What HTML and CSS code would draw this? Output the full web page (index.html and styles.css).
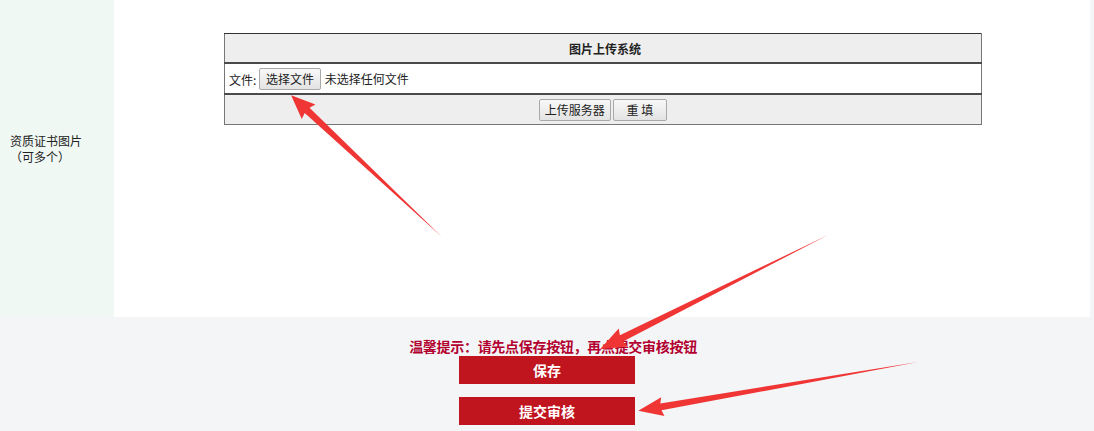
FILE: index.html
```
<!DOCTYPE html>
<html lang="zh-CN">
<head>
    <meta charset="UTF-8">
    <title>资质证书上传</title>
    <link rel="stylesheet" href="styles.css">
</head>
<body>

<div class="page">
    <div class="form-row">
        <div class="label-cell">资质证书图片<br>（可多个）</div>
        <div class="field-cell">
            <table class="upload-table">
                <tr class="head-row">
                    <th>图片上传系统</th>
                </tr>
                <tr class="file-row">
                    <td>
                        <span class="file-label">文件:</span>
                        <button class="btn" type="button">选择文件</button>
                        <span class="file-name">未选择任何文件</span>
                    </td>
                </tr>
                <tr class="action-row">
                    <td>
                        <button class="btn btn-upload" type="button">上传服务器</button>
                        <button class="btn btn-reset" type="button">重 填</button>
                    </td>
                </tr>
            </table>
        </div>
    </div>

    <div class="submit-area">
        <p class="tip">温馨提示：请先点保存按钮，再点提交审核按钮</p>
        <button class="red-btn" type="button">保存</button>
        <button class="red-btn" type="button">提交审核</button>
    </div>

    <!-- стрелки поверх скриншота -->
    <svg class="arrows" width="1094" height="431" viewBox="0 0 1094 431">
        <g fill="#f03535">
            <polygon transform="translate(442 237) rotate(223.2)" points="0,0 185,-3.5 183,-10 207,0 183,10 185,3.5"/>
            <polygon transform="translate(828 235) rotate(153.4)" points="0,0 231,-3.5 229,-10 255,0 229,10 231,3.5"/>
            <polygon transform="translate(918 362) rotate(170.1)" points="0,0 261,-3.5 259,-9.5 284,0 259,9.5 261,3.5"/>
        </g>
    </svg>
</div>

</body>
</html>
```

FILE: styles.css
```
body {
    margin: 0;
    font-family: "Noto Sans CJK SC", "Liberation Sans", sans-serif;
    font-size: 12px;
    color: #222;
    background-color: #f4f5f7;
}

.page {
    position: relative;
    width: 1094px;
    height: 431px;
    overflow: hidden;
}

.form-row {
    display: flex;
    height: 317px;
    margin-right: 4px;
}

.label-cell {
    width: 104px;
    padding: 133px 0 0 10px;
    line-height: 16px;
    background-color: #f0f8f4;
}

.field-cell {
    flex: 1;
    padding: 33px 0 0 110px;
    background-color: #fff;
}

.upload-table {
    width: 758px;
    border-collapse: collapse;
    border: 1px solid #777;
    border-top-color: #333;
}

.upload-table th,
.upload-table td {
    padding: 0 0 0 4px;
    font-size: 12px;
}

.head-row th {
    height: 28px;
    text-align: center;
    font-weight: bold;
    background-color: #eeeeee;
    border-bottom: 2px solid #4a4a4a;
}

.file-row td {
    height: 29px;
    background-color: #fff;
    border-bottom: 2px solid #4a4a4a;
}

.action-row td {
    height: 29px;
    padding-right: 4px;
    text-align: center;
    background-color: #eeeeee;
}

.btn {
    height: 22px;
    padding: 0 6px;
    font-family: inherit;
    font-size: 12px;
    color: #222;
    background: linear-gradient(#f8f8f8, #e3e3e3);
    border: 1px solid #a9a9a9;
    border-radius: 2px;
    vertical-align: middle;
}

.btn-upload {
    padding: 0 5px;
}

.btn-reset {
    padding: 0 13px;
    margin-left: -1px;
}

.file-label {
    vertical-align: middle;
}

.file-name {
    margin-left: 1px;
    vertical-align: middle;
}

.submit-area {
    display: flex;
    flex-direction: column;
    align-items: center;
    padding-top: 21px;
}

.tip {
    margin: 0 0 2px 12px;
    font-size: 14px;
    font-weight: bold;
    line-height: 16px;
    letter-spacing: -0.3px;
    color: #b2002f;
}

.red-btn {
    width: 176px;
    height: 28px;
    margin-bottom: 13px;
    font-family: inherit;
    font-size: 14px;
    font-weight: bold;
    color: #fff;
    background-color: #c0141f;
    border: none;
}

.arrows {
    position: absolute;
    left: 0;
    top: 0;
    pointer-events: none;
}
```
